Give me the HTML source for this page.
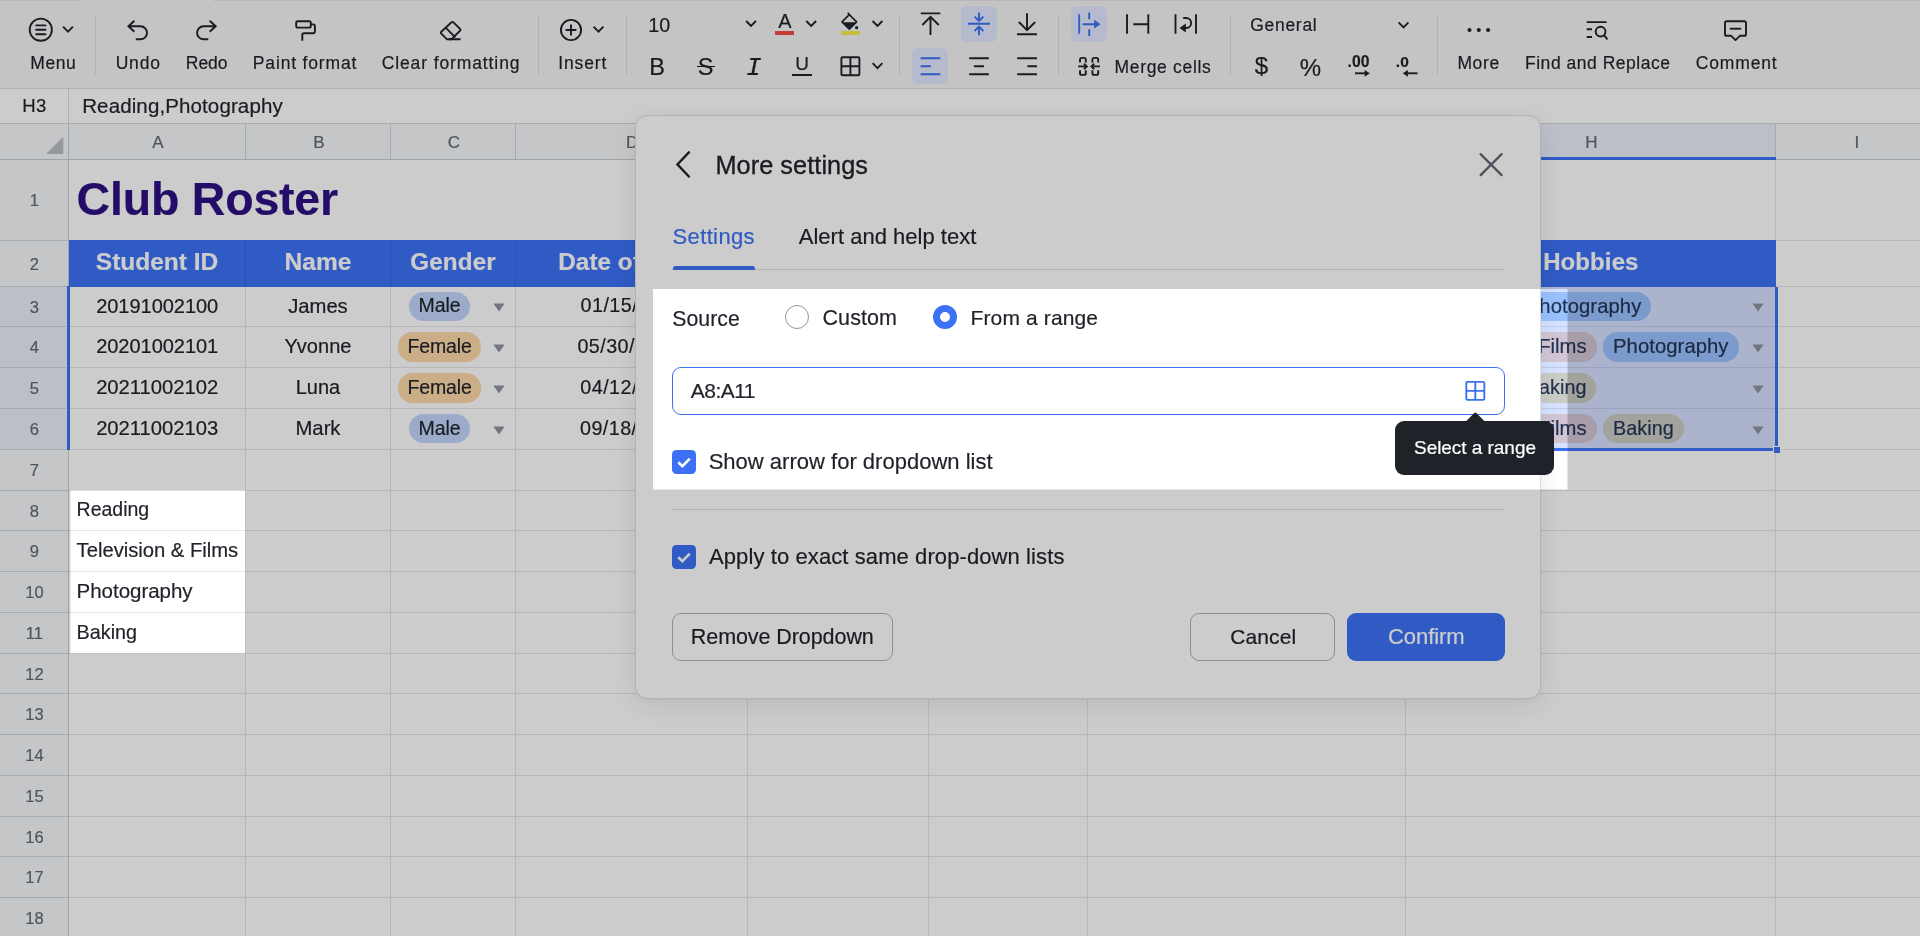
<!DOCTYPE html>
<html lang="en"><head><meta charset="utf-8"><title>Club Roster</title>
<style>
html,body{margin:0;padding:0}
body{width:1920px;height:936px;overflow:hidden;position:relative;background:#fff;font-family:"Liberation Sans",sans-serif;color:#1f2329;-webkit-font-smoothing:antialiased}
.ly{position:absolute;left:0;top:0;width:1920px;height:936px;will-change:transform}
.t{position:absolute;white-space:pre;line-height:1;font-kerning:normal;-webkit-text-stroke:0.2px currentColor}
</style></head>
<body>
<div id="sheet" class="ly">
<div style="position:absolute;left:0.00px;top:89.00px;width:1920.00px;height:34.00px;background:#ffffff;"></div>
<div style="position:absolute;left:0.00px;top:122.50px;width:1920.00px;height:1.50px;background:#d5d8dc;"></div>
<div style="position:absolute;left:68.00px;top:89.00px;width:1.00px;height:34.00px;background:#dcdee1;"></div>
<div class="t" style="left:22.20px;top:97px;font-size:18.5px;letter-spacing:0.344px;">H3</div>
<div class="t" style="left:82.20px;top:96px;font-size:20.5px;letter-spacing:0.121px;">Reading,Photography</div>
<div style="position:absolute;left:0.00px;top:124.00px;width:1920.00px;height:812.00px;background:#ffffff;"></div>
<div style="position:absolute;left:0.00px;top:124.00px;width:1920.00px;height:35.00px;background:#f7f8f9;"></div>
<div style="position:absolute;left:0.00px;top:159.00px;width:68.50px;height:777.00px;background:#f7f8f9;"></div>
<div style="position:absolute;left:1405.50px;top:124.00px;width:370.00px;height:35.00px;background:#ebeffb;"></div>
<div style="position:absolute;left:0.00px;top:286.50px;width:68.00px;height:163.00px;background:#ebeffb;"></div>
<div style="position:absolute;left:68.50px;top:240.00px;width:1707.50px;height:46.80px;background:#3c71f6;"></div>
<div style="position:absolute;left:68.50px;top:240.00px;width:1852.00px;height:1.00px;background:#e4e5e7;"></div>
<div style="position:absolute;left:0.00px;top:240.00px;width:68.50px;height:1.00px;background:#d3d6da;"></div>
<div style="position:absolute;left:68.50px;top:286.00px;width:1852.00px;height:1.00px;background:#e4e5e7;"></div>
<div style="position:absolute;left:0.00px;top:286.00px;width:68.50px;height:1.00px;background:#d3d6da;"></div>
<div style="position:absolute;left:68.50px;top:326.00px;width:1852.00px;height:1.00px;background:#e4e5e7;"></div>
<div style="position:absolute;left:0.00px;top:326.00px;width:68.50px;height:1.00px;background:#d3d6da;"></div>
<div style="position:absolute;left:68.50px;top:367.00px;width:1852.00px;height:1.00px;background:#e4e5e7;"></div>
<div style="position:absolute;left:0.00px;top:367.00px;width:68.50px;height:1.00px;background:#d3d6da;"></div>
<div style="position:absolute;left:68.50px;top:408.00px;width:1852.00px;height:1.00px;background:#e4e5e7;"></div>
<div style="position:absolute;left:0.00px;top:408.00px;width:68.50px;height:1.00px;background:#d3d6da;"></div>
<div style="position:absolute;left:68.50px;top:449.00px;width:1852.00px;height:1.00px;background:#e4e5e7;"></div>
<div style="position:absolute;left:0.00px;top:449.00px;width:68.50px;height:1.00px;background:#d3d6da;"></div>
<div style="position:absolute;left:68.50px;top:490.00px;width:1852.00px;height:1.00px;background:#e4e5e7;"></div>
<div style="position:absolute;left:0.00px;top:490.00px;width:68.50px;height:1.00px;background:#d3d6da;"></div>
<div style="position:absolute;left:68.50px;top:530.00px;width:1852.00px;height:1.00px;background:#e4e5e7;"></div>
<div style="position:absolute;left:0.00px;top:530.00px;width:68.50px;height:1.00px;background:#d3d6da;"></div>
<div style="position:absolute;left:68.50px;top:571.00px;width:1852.00px;height:1.00px;background:#e4e5e7;"></div>
<div style="position:absolute;left:0.00px;top:571.00px;width:68.50px;height:1.00px;background:#d3d6da;"></div>
<div style="position:absolute;left:68.50px;top:612.00px;width:1852.00px;height:1.00px;background:#e4e5e7;"></div>
<div style="position:absolute;left:0.00px;top:612.00px;width:68.50px;height:1.00px;background:#d3d6da;"></div>
<div style="position:absolute;left:68.50px;top:653.00px;width:1852.00px;height:1.00px;background:#e4e5e7;"></div>
<div style="position:absolute;left:0.00px;top:653.00px;width:68.50px;height:1.00px;background:#d3d6da;"></div>
<div style="position:absolute;left:68.50px;top:693.00px;width:1852.00px;height:1.00px;background:#e4e5e7;"></div>
<div style="position:absolute;left:0.00px;top:693.00px;width:68.50px;height:1.00px;background:#d3d6da;"></div>
<div style="position:absolute;left:68.50px;top:734.00px;width:1852.00px;height:1.00px;background:#e4e5e7;"></div>
<div style="position:absolute;left:0.00px;top:734.00px;width:68.50px;height:1.00px;background:#d3d6da;"></div>
<div style="position:absolute;left:68.50px;top:775.00px;width:1852.00px;height:1.00px;background:#e4e5e7;"></div>
<div style="position:absolute;left:0.00px;top:775.00px;width:68.50px;height:1.00px;background:#d3d6da;"></div>
<div style="position:absolute;left:68.50px;top:816.00px;width:1852.00px;height:1.00px;background:#e4e5e7;"></div>
<div style="position:absolute;left:0.00px;top:816.00px;width:68.50px;height:1.00px;background:#d3d6da;"></div>
<div style="position:absolute;left:68.50px;top:856.00px;width:1852.00px;height:1.00px;background:#e4e5e7;"></div>
<div style="position:absolute;left:0.00px;top:856.00px;width:68.50px;height:1.00px;background:#d3d6da;"></div>
<div style="position:absolute;left:68.50px;top:897.00px;width:1852.00px;height:1.00px;background:#e4e5e7;"></div>
<div style="position:absolute;left:0.00px;top:897.00px;width:68.50px;height:1.00px;background:#d3d6da;"></div>
<div style="position:absolute;left:68.50px;top:938.00px;width:1852.00px;height:1.00px;background:#e4e5e7;"></div>
<div style="position:absolute;left:0.00px;top:938.00px;width:68.50px;height:1.00px;background:#d3d6da;"></div>
<div style="position:absolute;left:68.50px;top:979.00px;width:1852.00px;height:1.00px;background:#e4e5e7;"></div>
<div style="position:absolute;left:0.00px;top:979.00px;width:68.50px;height:1.00px;background:#d3d6da;"></div>
<div style="position:absolute;left:245.00px;top:240.00px;width:1.00px;height:696.00px;background:#e4e5e7;"></div>
<div style="position:absolute;left:245.00px;top:124.00px;width:1.00px;height:35.00px;background:#d3d6da;"></div>
<div style="position:absolute;left:390.00px;top:240.00px;width:1.00px;height:696.00px;background:#e4e5e7;"></div>
<div style="position:absolute;left:390.00px;top:124.00px;width:1.00px;height:35.00px;background:#d3d6da;"></div>
<div style="position:absolute;left:515.00px;top:240.00px;width:1.00px;height:696.00px;background:#e4e5e7;"></div>
<div style="position:absolute;left:515.00px;top:124.00px;width:1.00px;height:35.00px;background:#d3d6da;"></div>
<div style="position:absolute;left:746.50px;top:240.00px;width:1.00px;height:696.00px;background:#e4e5e7;"></div>
<div style="position:absolute;left:746.50px;top:124.00px;width:1.00px;height:35.00px;background:#d3d6da;"></div>
<div style="position:absolute;left:928.00px;top:240.00px;width:1.00px;height:696.00px;background:#e4e5e7;"></div>
<div style="position:absolute;left:928.00px;top:124.00px;width:1.00px;height:35.00px;background:#d3d6da;"></div>
<div style="position:absolute;left:1086.50px;top:240.00px;width:1.00px;height:696.00px;background:#e4e5e7;"></div>
<div style="position:absolute;left:1086.50px;top:124.00px;width:1.00px;height:35.00px;background:#d3d6da;"></div>
<div style="position:absolute;left:1405.00px;top:240.00px;width:1.00px;height:696.00px;background:#e4e5e7;"></div>
<div style="position:absolute;left:1405.00px;top:124.00px;width:1.00px;height:35.00px;background:#d3d6da;"></div>
<div style="position:absolute;left:1775.00px;top:159.00px;width:1.00px;height:777.00px;background:#e4e5e7;"></div>
<div style="position:absolute;left:1775.00px;top:124.00px;width:1.00px;height:35.00px;background:#d3d6da;"></div>
<div style="position:absolute;left:68.50px;top:240.00px;width:1707.30px;height:46.70px;background:#3c71f6;"></div>
<div style="position:absolute;left:245.00px;top:240.00px;width:1.00px;height:46.70px;background:#3663e0;"></div>
<div style="position:absolute;left:390.00px;top:240.00px;width:1.00px;height:46.70px;background:#3663e0;"></div>
<div style="position:absolute;left:515.00px;top:240.00px;width:1.00px;height:46.70px;background:#3663e0;"></div>
<div style="position:absolute;left:746.50px;top:240.00px;width:1.00px;height:46.70px;background:#3663e0;"></div>
<div style="position:absolute;left:928.00px;top:240.00px;width:1.00px;height:46.70px;background:#3663e0;"></div>
<div style="position:absolute;left:1086.50px;top:240.00px;width:1.00px;height:46.70px;background:#3663e0;"></div>
<div style="position:absolute;left:1405.00px;top:240.00px;width:1.00px;height:46.70px;background:#3663e0;"></div>
<div style="position:absolute;left:0.00px;top:158.50px;width:1920.00px;height:1.60px;background:#c9ccd1;"></div>
<div style="position:absolute;left:67.80px;top:124.00px;width:1.40px;height:812.00px;background:#c9ccd1;"></div>
<svg style="position:absolute;left:44px;top:135px" width="22" height="22" viewBox="44 135 22 22"><path d="M63.3 136.8V154H46.1Z" fill="#bbbfc4"/></svg>
<div class="t" style="left:152.13px;top:134px;font-size:17px;color:#646a73;">A</div>
<div class="t" style="left:313.13px;top:134px;font-size:17px;color:#646a73;">B</div>
<div class="t" style="left:447.66px;top:134px;font-size:17px;color:#646a73;">C</div>
<div class="t" style="left:625.91px;top:134px;font-size:17px;color:#646a73;">D</div>
<div class="t" style="left:832.88px;top:134px;font-size:17px;color:#646a73;">E</div>
<div class="t" style="left:1003.35px;top:134px;font-size:17px;color:#646a73;">F</div>
<div class="t" style="left:1240.43px;top:134px;font-size:17px;color:#646a73;">G</div>
<div class="t" style="left:1585.16px;top:134px;font-size:17px;color:#646a73;">H</div>
<div class="t" style="left:1854.43px;top:134px;font-size:17px;color:#646a73;">I</div>
<div class="t" style="left:29.81px;top:192px;font-size:16.5px;color:#646a73;">1</div>
<div class="t" style="left:29.81px;top:256px;font-size:16.5px;color:#646a73;">2</div>
<div class="t" style="left:29.81px;top:299px;font-size:16.5px;color:#646a73;">3</div>
<div class="t" style="left:29.81px;top:339px;font-size:16.5px;color:#646a73;">4</div>
<div class="t" style="left:29.81px;top:380px;font-size:16.5px;color:#646a73;">5</div>
<div class="t" style="left:29.81px;top:421px;font-size:16.5px;color:#646a73;">6</div>
<div class="t" style="left:29.81px;top:462px;font-size:16.5px;color:#646a73;">7</div>
<div class="t" style="left:29.81px;top:503px;font-size:16.5px;color:#646a73;">8</div>
<div class="t" style="left:29.81px;top:543px;font-size:16.5px;color:#646a73;">9</div>
<div class="t" style="left:25.22px;top:584px;font-size:16.5px;color:#646a73;">10</div>
<div class="t" style="left:25.83px;top:625px;font-size:16.5px;color:#646a73;">11</div>
<div class="t" style="left:25.22px;top:666px;font-size:16.5px;color:#646a73;">12</div>
<div class="t" style="left:25.22px;top:706px;font-size:16.5px;color:#646a73;">13</div>
<div class="t" style="left:25.22px;top:747px;font-size:16.5px;color:#646a73;">14</div>
<div class="t" style="left:25.22px;top:788px;font-size:16.5px;color:#646a73;">15</div>
<div class="t" style="left:25.22px;top:829px;font-size:16.5px;color:#646a73;">16</div>
<div class="t" style="left:25.22px;top:869px;font-size:16.5px;color:#646a73;">17</div>
<div class="t" style="left:25.22px;top:910px;font-size:16.5px;color:#646a73;">18</div>
<div class="t" style="left:76.60px;top:176px;font-size:46.5px;letter-spacing:-0.202px;color:#2f1082;font-weight:700;">Club Roster</div>
<div class="t" style="left:95.80px;top:250px;font-size:24.5px;letter-spacing:-0.011px;color:#fff;font-weight:700;">Student ID</div>
<div class="t" style="left:284.55px;top:250px;font-size:24.5px;letter-spacing:0.055px;color:#fff;font-weight:700;">Name</div>
<div class="t" style="left:410.35px;top:250px;font-size:24.25px;letter-spacing:0.079px;color:#fff;font-weight:700;">Gender</div>
<div class="t" style="left:558.30px;top:250px;font-size:24.25px;letter-spacing:0.042px;color:#fff;font-weight:700;">Date of Birth</div>
<div class="t" style="left:1543.15px;top:250px;font-size:24px;letter-spacing:0.102px;color:#fff;font-weight:700;">Hobbies</div>
<div class="t" style="left:96.15px;top:296px;font-size:20.0px;letter-spacing:-0.026px;">20191002100</div>
<div class="t" style="left:288.25px;top:296px;font-size:20.25px;letter-spacing:-0.039px;">James</div>
<div style="position:absolute;left:409.00px;top:292.00px;width:61.10px;height:29.20px;background:#c5d6fd;border-radius:14.6px;"></div><div class="t" style="left:418.45px;top:296px;font-size:19.5px;letter-spacing:-0.027px;color:#1f2329;">Male</div>
<svg style="position:absolute;left:492.6px;top:303.2px" width="12" height="9" viewBox="0 0 12 9"><path d="M0.4 0.6H11.6L6 8.4Z" fill="#8f959e"/></svg>
<div class="t" style="left:580.60px;top:296px;font-size:19.75px;letter-spacing:0.439px;">01/15/</div>
<div style="position:absolute;left:1414.50px;top:292.00px;width:94.80px;height:29.20px;background:#c6e6ff;border-radius:14.6px;"></div><div class="t" style="left:1424.50px;top:296px;font-size:20.0px;letter-spacing:0.047px;color:#1f2329;">Reading</div>
<div style="position:absolute;left:1515.80px;top:292.00px;width:135.50px;height:29.20px;background:#b4d8ff;border-radius:14.6px;"></div><div class="t" style="left:1525.80px;top:296px;font-size:20.25px;letter-spacing:0.066px;color:#1f2329;">Photography</div>
<div class="t" style="left:96.15px;top:336px;font-size:20.0px;letter-spacing:-0.026px;">20201002101</div>
<div class="t" style="left:284.50px;top:336px;font-size:20.0px;letter-spacing:0.053px;">Yvonne</div>
<div style="position:absolute;left:398.00px;top:332.40px;width:83.40px;height:29.20px;background:#fedaaa;border-radius:14.6px;"></div><div class="t" style="left:407.50px;top:337px;font-size:19.5px;letter-spacing:-0.126px;color:#1f2329;">Female</div>
<svg style="position:absolute;left:492.6px;top:343.6px" width="12" height="9" viewBox="0 0 12 9"><path d="M0.4 0.6H11.6L6 8.4Z" fill="#8f959e"/></svg>
<div class="t" style="left:577.40px;top:337px;font-size:19.75px;letter-spacing:0.439px;">05/30/</div>
<div style="position:absolute;left:1414.50px;top:332.40px;width:182.00px;height:29.20px;background:#fbdccb;border-radius:14.6px;"></div><div class="t" style="left:1424.50px;top:336px;font-size:20.25px;color:#1f2329;">Television &amp; Films</div>
<div style="position:absolute;left:1603.00px;top:332.40px;width:135.50px;height:29.20px;background:#b4d8ff;border-radius:14.6px;"></div><div class="t" style="left:1613.00px;top:336px;font-size:20.25px;letter-spacing:0.066px;color:#1f2329;">Photography</div>
<div class="t" style="left:96.15px;top:377px;font-size:20.25px;letter-spacing:-0.029px;">20211002102</div>
<div class="t" style="left:295.75px;top:377px;font-size:20.0px;">Luna</div>
<div style="position:absolute;left:398.00px;top:373.40px;width:83.40px;height:29.20px;background:#fedaaa;border-radius:14.6px;"></div><div class="t" style="left:407.50px;top:378px;font-size:19.5px;letter-spacing:-0.126px;color:#1f2329;">Female</div>
<svg style="position:absolute;left:492.6px;top:384.6px" width="12" height="9" viewBox="0 0 12 9"><path d="M0.4 0.6H11.6L6 8.4Z" fill="#8f959e"/></svg>
<div class="t" style="left:580.30px;top:378px;font-size:19.75px;letter-spacing:0.439px;">04/12/</div>
<div style="position:absolute;left:1414.50px;top:373.40px;width:94.80px;height:29.20px;background:#c6e6ff;border-radius:14.6px;"></div><div class="t" style="left:1424.50px;top:377px;font-size:20.0px;letter-spacing:0.047px;color:#1f2329;">Reading</div>
<div style="position:absolute;left:1515.80px;top:373.40px;width:80.70px;height:29.20px;background:#f3e4b8;border-radius:14.6px;"></div><div class="t" style="left:1525.80px;top:378px;font-size:19.75px;letter-spacing:0.062px;color:#1f2329;">Baking</div>
<div class="t" style="left:96.15px;top:418px;font-size:20.25px;letter-spacing:-0.029px;">20211002103</div>
<div class="t" style="left:295.50px;top:418px;font-size:20.25px;">Mark</div>
<div style="position:absolute;left:409.00px;top:414.30px;width:61.10px;height:29.20px;background:#c5d6fd;border-radius:14.6px;"></div><div class="t" style="left:418.45px;top:419px;font-size:19.5px;letter-spacing:-0.027px;color:#1f2329;">Male</div>
<svg style="position:absolute;left:492.6px;top:425.5px" width="12" height="9" viewBox="0 0 12 9"><path d="M0.4 0.6H11.6L6 8.4Z" fill="#8f959e"/></svg>
<div class="t" style="left:580.00px;top:419px;font-size:19.75px;letter-spacing:0.439px;">09/18/</div>
<div style="position:absolute;left:1414.50px;top:414.30px;width:182.00px;height:29.20px;background:#fbdccb;border-radius:14.6px;"></div><div class="t" style="left:1424.50px;top:418px;font-size:20.25px;color:#1f2329;">Television &amp; Films</div>
<div style="position:absolute;left:1603.00px;top:414.30px;width:80.70px;height:29.20px;background:#f3e4b8;border-radius:14.6px;"></div><div class="t" style="left:1613.00px;top:419px;font-size:19.75px;letter-spacing:0.062px;color:#1f2329;">Baking</div>
<div class="t" style="left:76.60px;top:500px;font-size:19.5px;letter-spacing:-0.007px;">Reading</div>
<div class="t" style="left:76.60px;top:540px;font-size:20.25px;letter-spacing:-0.026px;">Television &amp; Films</div>
<div class="t" style="left:76.60px;top:581px;font-size:20.5px;letter-spacing:-0.027px;">Photography</div>
<div class="t" style="left:76.60px;top:623px;font-size:19.75px;letter-spacing:0.022px;">Baking</div>
<div style="position:absolute;left:1405.50px;top:287.00px;width:370.00px;height:162.50px;background:rgba(51,112,255,0.2);"></div>
<svg style="position:absolute;left:1752.2px;top:303.2px" width="12" height="9" viewBox="0 0 12 9"><path d="M0.4 0.6H11.6L6 8.4Z" fill="#8f959e"/></svg>
<svg style="position:absolute;left:1752.2px;top:343.6px" width="12" height="9" viewBox="0 0 12 9"><path d="M0.4 0.6H11.6L6 8.4Z" fill="#8f959e"/></svg>
<svg style="position:absolute;left:1752.2px;top:384.6px" width="12" height="9" viewBox="0 0 12 9"><path d="M0.4 0.6H11.6L6 8.4Z" fill="#8f959e"/></svg>
<svg style="position:absolute;left:1752.2px;top:425.5px" width="12" height="9" viewBox="0 0 12 9"><path d="M0.4 0.6H11.6L6 8.4Z" fill="#8f959e"/></svg>
<div style="position:absolute;left:66.80px;top:285.50px;width:3.00px;height:164.50px;background:#3c71f5;"></div>
<div style="position:absolute;left:1405.50px;top:156.50px;width:370.50px;height:3.00px;background:#3c71f5;"></div>
<div style="position:absolute;left:1775.40px;top:286.50px;width:2.20px;height:164.00px;background:#3c71f5;"></div>
<div style="position:absolute;left:1405.50px;top:448.40px;width:372.00px;height:2.20px;background:#3c71f5;"></div>
<div style="position:absolute;left:1405.00px;top:286.50px;width:2.20px;height:164.00px;background:#3c71f5;"></div>
<div style="position:absolute;left:1772.50px;top:445.50px;width:8.00px;height:8.00px;background:#3c71f5;border:1px solid #fff;box-sizing:border-box;"></div>
<div style="position:absolute;left:0;top:0;width:1920px;height:88px;background:#f5f6f7"></div>
<div style="position:absolute;left:0;top:0;width:82px;height:1px;background:#e6e7ea"></div><div style="position:absolute;left:213px;top:0;width:1707px;height:1px;background:#e6e7ea"></div>
<div style="position:absolute;left:0;top:88px;width:1920px;height:1px;background:#dcdee1"></div>
<div style="position:absolute;left:961.2px;top:5.8px;width:35.8px;height:35.8px;border-radius:6px;background:#e3eaff"></div>
<div style="position:absolute;left:1071.2px;top:5.8px;width:35.8px;height:35.8px;border-radius:6px;background:#e3eaff"></div>
<div style="position:absolute;left:912.4px;top:48.2px;width:35.8px;height:35.8px;border-radius:6px;background:#e3eaff"></div>
<div style="position:absolute;left:95.3px;top:15px;width:1px;height:60px;background:#dcdee1"></div>
<div style="position:absolute;left:537.8px;top:15px;width:1px;height:60px;background:#dcdee1"></div>
<div style="position:absolute;left:625.7px;top:15px;width:1px;height:60px;background:#dcdee1"></div>
<div style="position:absolute;left:899.0px;top:15px;width:1px;height:60px;background:#dcdee1"></div>
<div style="position:absolute;left:1057.5px;top:15px;width:1px;height:60px;background:#dcdee1"></div>
<div style="position:absolute;left:1230.0px;top:15px;width:1px;height:60px;background:#dcdee1"></div>
<div style="position:absolute;left:1436.7px;top:15px;width:1px;height:60px;background:#dcdee1"></div>
<div class="t" style="left:30.25px;top:55px;font-size:17.5px;letter-spacing:0.573px;">Menu</div>
<div class="t" style="left:115.65px;top:55px;font-size:17.5px;letter-spacing:0.819px;">Undo</div>
<div class="t" style="left:185.85px;top:55px;font-size:17.5px;letter-spacing:-0.048px;">Redo</div>
<div class="t" style="left:252.85px;top:55px;font-size:17.5px;letter-spacing:0.831px;">Paint format</div>
<div class="t" style="left:381.70px;top:55px;font-size:17.5px;letter-spacing:0.887px;">Clear formatting</div>
<div class="t" style="left:558.30px;top:55px;font-size:17.5px;letter-spacing:0.844px;">Insert</div>
<div class="t" style="left:648.30px;top:16px;font-size:19.75px;letter-spacing:0.031px;">10</div>
<div class="t" style="left:1114.50px;top:59px;font-size:17.5px;letter-spacing:0.682px;">Merge cells</div>
<div class="t" style="left:1250.30px;top:17px;font-size:17.5px;letter-spacing:0.689px;">General</div>
<div class="t" style="left:1457.45px;top:55px;font-size:17.5px;letter-spacing:0.608px;">More</div>
<div class="t" style="left:1525.00px;top:55px;font-size:17.5px;letter-spacing:0.522px;">Find and Replace</div>
<div class="t" style="left:1695.75px;top:55px;font-size:17.5px;letter-spacing:0.840px;">Comment</div>
<div class="t" style="left:778.23px;top:11px;font-size:20px;">A</div>
<div style="position:absolute;left:775.2px;top:31px;width:19.2px;height:3.8px;background:#f54a45"></div>
<div style="position:absolute;left:841.4px;top:31px;width:18.4px;height:3.6px;background:#f7f04a"></div>
<div class="t" style="left:649.16px;top:56px;font-size:23.5px;">B</div>
<div class="t" style="left:697.86px;top:56px;font-size:23.5px;">S</div>
<div style="position:absolute;left:696.7px;top:65.6px;width:18px;height:1.7px;background:#1f2329"></div>
<div class="t" style="left:746px;top:55px;font-size:26px;font-style:italic;font-family:'Liberation Mono',monospace;">I</div>
<div class="t" style="left:795.13px;top:54px;font-size:19px;">U</div>
<div style="position:absolute;left:792px;top:74px;width:19.8px;height:1.8px;background:#1f2329"></div>
<div class="t" style="left:1254.82px;top:54px;font-size:24px;">$</div>
<div class="t" style="left:1299.73px;top:56px;font-size:24px;">%</div>
<div class="t" style="left:1347.50px;top:54px;font-size:15.75px;letter-spacing:0.047px;font-weight:700;">.00</div>
<div class="t" style="left:1395.80px;top:54px;font-size:15.5px;letter-spacing:0.062px;font-weight:700;">.0</div>
<svg style="position:absolute;left:0;top:0" width="1920" height="88" viewBox="0 0 1920 88" fill="none" stroke="#1f2329" stroke-width="1.9" stroke-linecap="butt" stroke-linejoin="miter">
<circle cx="40.8" cy="29.7" r="11.1"/>
<path d="M36.2 25.4H45.5M36.2 29.8H45.5M36.2 34.2H45.5" stroke-linecap="round"/>
<path d="M63.1 26.7L68.0 31.7L72.9 26.7" stroke="#1f2329"/>
<path d="M134.4 20.8L128.4 26.3L134.4 31.8M128.8 26.3H140.5a6.5 6.5 0 0 1 0 13H135.8"/>
<path d="M209.7 20.8L215.7 26.3L209.7 31.8M215.3 26.3H203.6a6.5 6.5 0 0 0 0 13H208.3"/>
<rect x="296.2" y="21.2" width="14.6" height="6.4" rx="1.6"/>
<path d="M310.8 24.4H313.3a1.6 1.6 0 0 1 1.6 1.6V31.6a1.6 1.6 0 0 1 -1.6 1.6H303.9a1.6 1.6 0 0 0 -1.6 1.6V40.8"/>
<path d="M451.5 22.3a1.4 1.4 0 0 1 2 0L460 28.8a1.4 1.4 0 0 1 0 2L451.6 39.2H446.8L441.3 33.7a1.4 1.4 0 0 1 0 -2Z" stroke-linejoin="round"/>
<path d="M445.6 27.6L455.3 37.3M449 39.2H460.6"/>
<circle cx="571" cy="30" r="10.1"/>
<path d="M565.6 30H576.4M571 24.6V35.4"/>
<path d="M593.6 26.7L598.5 31.7L603.4 26.7" stroke="#1f2329"/>
<path d="M746.1 21.0L751.0 26.0L755.9 21.0" stroke="#1f2329"/>
<path d="M806.3 21.0L811.2 26.0L816.1 21.0" stroke="#1f2329"/>
<path d="M872.6 21.0L877.5 26.0L882.4 21.0" stroke="#1f2329"/>
<path d="M872.6 63.1L877.5 68.1L882.4 63.1" stroke="#1f2329"/>
<path d="M1398.6 22.3L1403.5 27.3L1408.4 22.3" stroke="#1f2329"/>
<path d="M849.3 14.6L856.6 21.9L849.3 29.2L842 21.9Z" stroke-width="1.6" stroke-linejoin="round"/>
<path d="M842.6 22.3H856L849.3 29Z" fill="#1f2329" stroke="none"/>
<path d="M847.6 12.9L849.6 14.9" stroke-width="1.6"/>
<circle cx="856.6" cy="27.7" r="1.6" fill="#1f2329" stroke="none"/>
<rect x="841.4" y="57.2" width="18" height="18" rx="1"/>
<path d="M850.4 57.2V75.2M841.4 66.2H859.4"/>
<path d="M920.8 13.4H940.3M930.5 35V16.8M922.3 25L930.5 16.8L938.7 25"/>
<g stroke="#3c71f5"><path d="M968 23.8H990M979 12.5V20.6M974.6 16.6L979 21L983.4 16.6M979 35.2V27M974.6 31L979 26.6L983.4 31"/></g>
<path d="M1027 13.3V30.2M1018.8 22L1027 30.2L1035.2 22M1017 34.2H1037"/>
<g stroke="#3c71f5"><path d="M1079.2 14.2V33.8M1089.2 12.4V19.2M1089.2 29.2V36M1082.6 24.2H1095"/><path d="M1094.2 19.8L1100.6 24.2L1094.2 28.6Z" fill="#3c71f5" stroke="none"/></g>
<path d="M1127 14.2V33.8M1148.3 14.2V33.8M1133.3 24.2H1148.3"/>
<path d="M1175.5 14.2V33.8M1196 14.2V33.8M1183.2 18H1186.2a5 5 0 0 1 0 10H1184.5"/>
<path d="M1179.5 28L1185.8 23.4V32.6Z" fill="#1f2329" stroke="none"/>
<g stroke="#3c71f5"><path d="M920.6 58.3H940.3M920.6 66.3H930.8M920.6 74.2H940.3"/></g>
<path d="M969.2 58.3H988.8M973.9 66.3H983.9M969.2 74.2H988.8"/>
<path d="M1017.2 58.3H1037M1027.4 66.3H1037M1017.2 74.2H1037"/>
<path d="M1080 62.6V59.6a1.7 1.7 0 0 1 1.7 -1.7H1084.1a1.7 1.7 0 0 1 1.7 1.7V62.6M1080 70.2V73.2a1.7 1.7 0 0 0 1.7 1.7H1084.1a1.7 1.7 0 0 0 1.7 -1.7V70.2M1078.2 66.4H1086.6M1084 63.6L1086.8 66.4L1084 69.2"/>
<path d="M1098.2 62.6V59.6a1.7 1.7 0 0 0 -1.7 -1.7H1094.1a1.7 1.7 0 0 0 -1.7 1.7V62.6M1098.2 70.2V73.2a1.7 1.7 0 0 1 -1.7 1.7H1094.1a1.7 1.7 0 0 1 -1.7 -1.7V70.2M1100 66.4H1091.6M1094.2 63.6L1091.4 66.4L1094.2 69.2"/>
<path d="M1355 73.3H1366"/><path d="M1364.6 69.9L1369.8 73.3L1364.6 76.7Z" fill="#1f2329" stroke="none"/>
<path d="M1417.5 73.3H1406.5"/><path d="M1407.9 69.9L1402.7 73.3L1407.9 76.7Z" fill="#1f2329" stroke="none"/>
<circle cx="1469.5" cy="30" r="2.05" fill="#1f2329" stroke="none"/>
<circle cx="1478.8" cy="30" r="2.05" fill="#1f2329" stroke="none"/>
<circle cx="1488.1" cy="30" r="2.05" fill="#1f2329" stroke="none"/>
<path d="M1586.7 22.1H1606.6M1586.7 29.3H1592M1586.7 37H1592"/>
<circle cx="1600.6" cy="31.6" r="4.9"/><path d="M1604.2 35.4L1607.4 39.4"/>
<path d="M1726.6 21.2H1744.4a1.6 1.6 0 0 1 1.6 1.6V34.2a1.6 1.6 0 0 1 -1.6 1.6H1739.8L1735.5 40.1L1731.2 35.8H1726.6a1.6 1.6 0 0 1 -1.6 -1.6V22.8a1.6 1.6 0 0 1 1.6 -1.6Z" stroke-linejoin="round"/>
<path d="M1729.8 28.7H1741.2"/>
</svg>
</div>
<div id="dialog" class="ly">
<div style="position:absolute;left:636px;top:116px;width:903.5px;height:581.5px;background:#fff;border-radius:12px;box-shadow:0 0 0 1px #dee0e3, 0 6px 24px rgba(31,35,41,0.10), 0 2px 6px rgba(31,35,41,0.05)"></div>
<svg style="position:absolute;left:670px;top:146px" width="30" height="38" viewBox="670 146 30 38" fill="none" stroke="#1f2329" stroke-width="2.3" stroke-linejoin="miter"><path d="M689.6 151.6L677.4 164.4L689.6 177.2"/></svg>
<svg style="position:absolute;left:1474px;top:148px" width="34" height="34" viewBox="1474 148 34 34" fill="none" stroke="#5f6570" stroke-width="2.2" stroke-linecap="round"><path d="M1480.6 154.1L1501.6 175.1M1501.6 154.1L1480.6 175.1"/></svg>
<div class="t" style="left:715.40px;top:153px;font-size:25.25px;letter-spacing:0.086px;-webkit-text-stroke:0.35px #1f2329;">More settings</div>
<div class="t" style="left:672.50px;top:226px;font-size:22.0px;letter-spacing:0.371px;color:#3c71f5;">Settings</div>
<div class="t" style="left:798.70px;top:226px;font-size:22.0px;letter-spacing:0.020px;">Alert and help text</div>
<div style="position:absolute;left:672.00px;top:268.60px;width:831.50px;height:1.20px;background:#dee0e3;"></div>
<div style="position:absolute;left:672.50px;top:266.20px;width:82.20px;height:3.60px;background:#3c71f5;border-radius:2.5px 2.5px 0 0;"></div>
<div class="t" style="left:672.30px;top:309px;font-size:21.25px;letter-spacing:0.031px;">Source</div>
<div style="position:absolute;left:785px;top:305px;width:24px;height:24px;border-radius:50%;box-sizing:border-box;border:1.9px solid #8f959e;background:#fff"></div>
<div class="t" style="left:822.50px;top:308px;font-size:21.5px;letter-spacing:0.084px;">Custom</div>
<div style="position:absolute;left:933px;top:305px;width:24px;height:24px;border-radius:50%;box-sizing:border-box;border:7px solid #3c71f5;background:#fff"></div>
<div class="t" style="left:970.50px;top:307px;font-size:21px;letter-spacing:0.131px;">From a range</div>
<div style="position:absolute;left:672px;top:367px;width:832.5px;height:47.5px;box-sizing:border-box;border:1.9px solid #3c71f5;border-radius:9px;background:#fff"></div>
<div class="t" style="left:690.80px;top:380px;font-size:21px;letter-spacing:-0.546px;">A8:A11</div>
<svg style="position:absolute;left:1464px;top:380px" width="22" height="22" viewBox="1464 380 22 22" fill="none" stroke="#3c71f5" stroke-width="1.9"><rect x="1466.3" y="381.9" width="18" height="18" rx="1.2"/><path d="M1475.3 381.9V399.9M1466.3 390.9H1484.3"/></svg>
<div style="position:absolute;left:672.00px;top:450.00px;width:24.00px;height:24.00px;background:#3c71f5;border-radius:4.5px;"></div><svg style="position:absolute;left:672px;top:450px" width="24" height="24" viewBox="0 0 24 24" fill="none" stroke="#fff" stroke-width="2.6"><path d="M6.3 12.2L10.4 16.2L17.8 8.6"/></svg>
<div class="t" style="left:708.70px;top:451px;font-size:22.0px;letter-spacing:0.008px;">Show arrow for dropdown list</div>
<div style="position:absolute;left:672.00px;top:508.60px;width:831.50px;height:1.20px;background:#dee0e3;"></div>
<div style="position:absolute;left:672.00px;top:545.30px;width:24.00px;height:24.00px;background:#3c71f5;border-radius:4.5px;"></div><svg style="position:absolute;left:672px;top:545.3px" width="24" height="24" viewBox="0 0 24 24" fill="none" stroke="#fff" stroke-width="2.6"><path d="M6.3 12.2L10.4 16.2L17.8 8.6"/></svg>
<div class="t" style="left:709.00px;top:546px;font-size:22.0px;letter-spacing:0.095px;">Apply to exact same drop-down lists</div>
<div style="position:absolute;left:672.30px;top:613.30px;width:220.30px;height:47.60px;background:#fff;box-sizing:border-box;border-radius:9px;border:1.5px solid #aeb3ba;"></div>
<div class="t" style="left:690.80px;top:627px;font-size:21.5px;letter-spacing:-0.074px;">Remove Dropdown</div>
<div style="position:absolute;left:1190.40px;top:613.30px;width:144.60px;height:47.60px;background:#fff;box-sizing:border-box;border-radius:9px;border:1.5px solid #aeb3ba;"></div>
<div class="t" style="left:1230.25px;top:626px;font-size:21px;letter-spacing:0.105px;">Cancel</div>
<div style="position:absolute;left:1347.40px;top:613.20px;width:157.20px;height:47.80px;background:#3c71f5;box-sizing:border-box;border-radius:9px;"></div>
<div class="t" style="left:1388.00px;top:626px;font-size:22.0px;letter-spacing:-0.069px;color:#fff;">Confirm</div>
</div>
<svg style="position:absolute;left:0;top:0" width="1920" height="936" viewBox="0 0 1920 936"><path fill="rgba(0,0,0,0.2)" fill-rule="evenodd" d="M0 0H1920V936H0Z M653 289H1567.5V489.6H653Z M70.4 490.2H245.2V653.3H70.4Z"/></svg>
<div id="tip" class="ly">
<div style="position:absolute;left:1395.00px;top:421.00px;width:159.00px;height:54.00px;background:#1f2329;border-radius:9px;"></div>
<svg style="position:absolute;left:1462px;top:410px" width="26" height="14" viewBox="1462 410 26 14"><path d="M1464.8 422.5L1474 413.3a1.8 1.8 0 0 1 2.6 0L1485.8 422.5Z" fill="#1f2329"/></svg>
<div class="t" style="left:1414.00px;top:438px;font-size:19.0px;letter-spacing:-0.041px;color:#fff;">Select a range</div>
</div>
</body></html>
